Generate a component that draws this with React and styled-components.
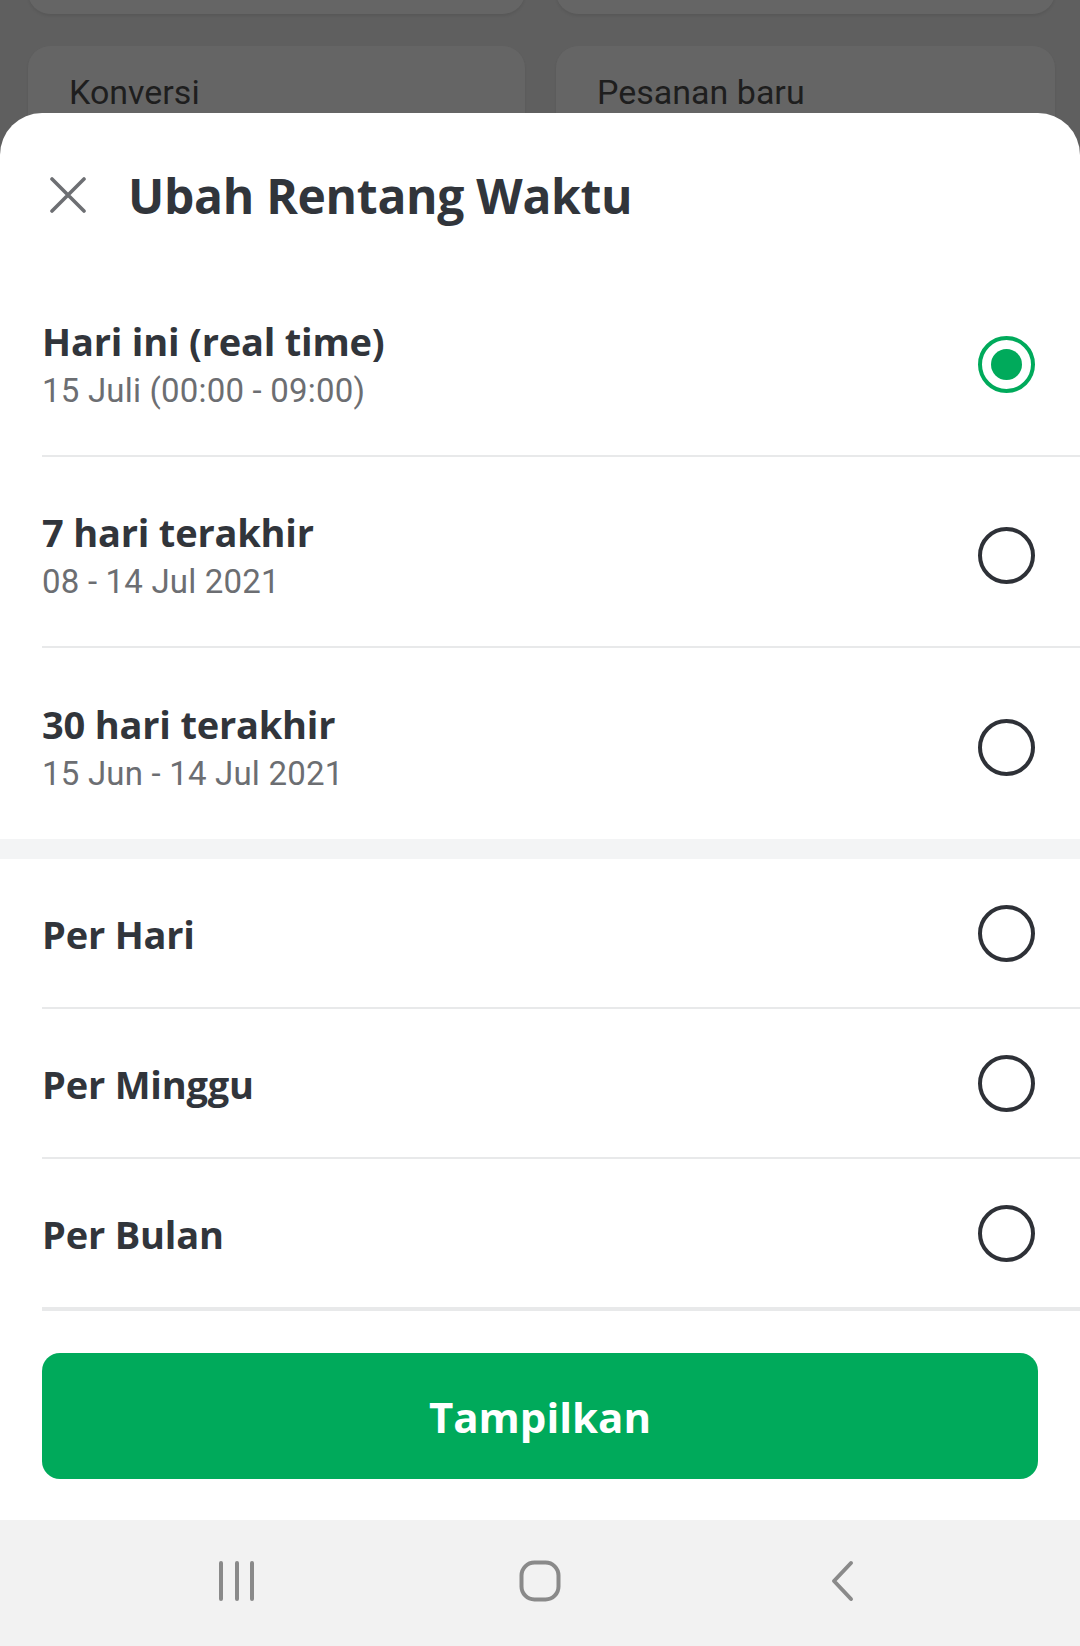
import React, { useState } from "react";
import styled, { createGlobalStyle } from "styled-components";

const Global = createGlobalStyle`
  html, body { margin: 0; padding: 0; background: #5f5f5f; }
  body { width: 1080px; height: 1646px; overflow: hidden; }
  * { box-sizing: border-box; }
`;

const Screen = styled.div`
  width: 1080px;
  height: 1646px;
  display: flex;
  flex-direction: column;
  background: #5f5f5f;
  overflow: hidden;
`;

const Backdrop = styled.div`
  height: 216px;
  flex: none;
  overflow: hidden;
  display: grid;
  grid-template-columns: 497px 499px;
  grid-template-rows: 74px 200px;
  column-gap: 31px;
  row-gap: 32px;
  padding: 0 26px 0 28px;
  margin-top: -60px;
`;

const BgCard = styled.div`
  background: #656565;
  border-radius: 22px;
  box-shadow: 0 2px 3px rgba(0, 0, 0, 0.08);
  padding: 26px 0 0 41px;
  font-family: Roboto, "Liberation Sans", sans-serif;
  font-size: 34px;
  color: #1e1e1e;
  line-height: 40px;
`;

const Sheet = styled.div`
  position: relative;
  z-index: 1;
  margin-top: -43px;
  flex: 1;
  background: #ffffff;
  border-radius: 42px 42px 0 0;
  display: flex;
  flex-direction: column;
`;

const Header = styled.div`
  height: 153px;
  display: flex;
  align-items: center;
  padding: 11px 0 0 50px;
  gap: 42px;
`;

const CloseBtn = styled.button`
  border: 0;
  background: none;
  padding: 0;
  width: 36px;
  height: 36px;
  display: flex;
  cursor: pointer;
`;

const Title = styled.h1`
  margin: 0;
  font-family: "Open Sans", Lato, sans-serif;
  font-weight: 700;
  font-size: 48px;
  color: #31353b;
  letter-spacing: -0.3px;
`;

const Group = styled.div`
  display: flex;
  flex-direction: column;
`;

const Separator = styled.div`
  height: 20px;
  background: #f3f4f5;
  flex: none;
`;

const Row = styled.label`
  display: flex;
  align-items: center;
  justify-content: space-between;
  height: ${(p) => (p.$tall ? 191 : 150)}px;
  margin-left: 42px;
  padding-right: 45px;
  border-bottom: ${(p) => (p.$last ? "none" : "2px solid #e8e9ea")};
  cursor: pointer;
`;

const TextCol = styled.div`
  display: flex;
  flex-direction: column;
  padding-top: ${(p) => (p.$sub ? 8 : 2)}px;
`;

const RowTitle = styled.div`
  font-family: "Open Sans", Lato, sans-serif;
  font-weight: 700;
  font-size: 38px;
  line-height: 50px;
  color: #31353b;
  letter-spacing: -0.2px;
`;

const RowSub = styled.div`
  font-family: Roboto, "Liberation Sans", sans-serif;
  font-size: 33px;
  line-height: 44px;
  color: #6c6e72;
  margin-top: 3px;
  letter-spacing: 0.2px;
`;

const Radio = styled.span`
  width: 57px;
  height: 57px;
  border-radius: 50%;
  border: 4.5px solid ${(p) => (p.$on ? "#00aa5b" : "#2e3137")};
  display: flex;
  align-items: center;
  justify-content: center;
  flex: none;
  margin-top: ${(p) => (p.$low ? 7 : 0)}px;
  &::after {
    content: "";
    width: 31px;
    height: 31px;
    border-radius: 50%;
    background: ${(p) => (p.$on ? "#00aa5b" : "transparent")};
  }
`;

const Footer = styled.div`
  padding: 42px 42px 40px 0;
  border-top: 2px solid #e8e9ea;
  margin-left: 42px;
`;

const Button = styled.button`
  width: 996px;
  height: 126px;
  border: 0;
  border-radius: 18px;
  background: #00aa5b;
  color: #ffffff;
  font-family: "Open Sans", Lato, sans-serif;
  font-weight: 700;
  font-size: 42px;
  cursor: pointer;
`;

const NavBar = styled.div`
  margin-top: auto;
  height: 126px;
  background: #f2f2f2;
  display: flex;
  align-items: center;
  padding: 0 0 4px 217px;
  gap: 262px;
  & > :last-child { margin-left: 6px; }
`;

const NavIcon = styled.svg`
  display: block;
  flex: none;
`;

const options = [
  { id: "today", title: "Hari ini (real time)", sub: "15 Juli (00:00 - 09:00)" },
  { id: "7d", title: "7 hari terakhir", sub: "08 - 14 Jul 2021" },
  { id: "30d", title: "30 hari terakhir", sub: "15 Jun - 14 Jul 2021", last: true },
];

const periods = [
  { id: "day", title: "Per Hari" },
  { id: "week", title: "Per Minggu" },
  { id: "month", title: "Per Bulan" },
];

export default function App() {
  const [sel, setSel] = useState("today");
  return (
    <>
      <Global />
      <Screen>
        <Backdrop>
          <BgCard />
          <BgCard />
          <BgCard>Konversi</BgCard>
          <BgCard>Pesanan baru</BgCard>
        </Backdrop>
        <Sheet>
          <Header>
            <CloseBtn aria-label="Tutup">
              <svg width="36" height="36" viewBox="0 0 36 36">
                <path d="M2 2 L34 34 M34 2 L2 34" stroke="#6d6f73" strokeWidth="3.6" strokeLinecap="round" />
              </svg>
            </CloseBtn>
            <Title>Ubah Rentang Waktu</Title>
          </Header>
          <Group>
            {options.map((o) => (
              <Row key={o.id} $tall $last={o.last} onClick={() => setSel(o.id)}>
                <TextCol $sub>
                  <RowTitle>{o.title}</RowTitle>
                  <RowSub>{o.sub}</RowSub>
                </TextCol>
                <Radio $low $on={sel === o.id} />
              </Row>
            ))}
          </Group>
          <Separator />
          <Group>
            {periods.map((o) => (
              <Row key={o.id} onClick={() => setSel(o.id)}>
                <TextCol>
                  <RowTitle>{o.title}</RowTitle>
                </TextCol>
                <Radio $on={sel === o.id} />
              </Row>
            ))}
          </Group>
          <Footer>
            <Button>Tampilkan</Button>
          </Footer>
          <NavBar>
            <NavIcon width="40" height="42" viewBox="0 0 40 42">
              <path d="M4 3 V39 M20 3 V39 M35 3 V39" stroke="#8a8a8a" strokeWidth="4" strokeLinecap="round" />
            </NavIcon>
            <NavIcon width="42" height="42" viewBox="0 0 42 42">
              <rect x="2.5" y="2.5" width="37" height="37" rx="13" fill="none" stroke="#8a8a8a" strokeWidth="4" />
            </NavIcon>
            <NavIcon width="26" height="42" viewBox="0 0 26 42">
              <path d="M22 3 L5 21 L22 39" fill="none" stroke="#8a8a8a" strokeWidth="4" strokeLinecap="round" strokeLinejoin="round" />
            </NavIcon>
          </NavBar>
        </Sheet>
      </Screen>
    </>
  );
}
